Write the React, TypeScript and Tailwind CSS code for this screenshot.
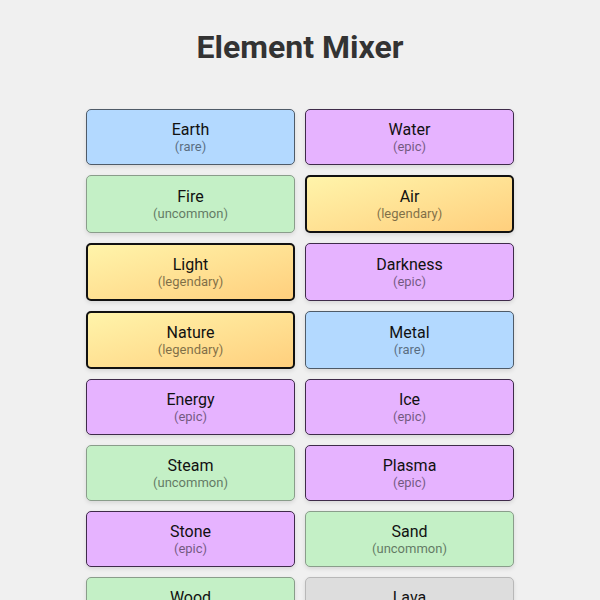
import React from "react";

type Rarity = "common" | "uncommon" | "rare" | "epic" | "legendary";

const items: { name: string; rarity: Rarity }[] = [
  { name: "Earth", rarity: "rare" },
  { name: "Water", rarity: "epic" },
  { name: "Fire", rarity: "uncommon" },
  { name: "Air", rarity: "legendary" },
  { name: "Light", rarity: "legendary" },
  { name: "Darkness", rarity: "epic" },
  { name: "Nature", rarity: "legendary" },
  { name: "Metal", rarity: "rare" },
  { name: "Energy", rarity: "epic" },
  { name: "Ice", rarity: "epic" },
  { name: "Steam", rarity: "uncommon" },
  { name: "Plasma", rarity: "epic" },
  { name: "Stone", rarity: "epic" },
  { name: "Sand", rarity: "uncommon" },
  { name: "Wood", rarity: "uncommon" },
  { name: "Lava", rarity: "common" },
];

const styles: Record<Rarity, string> = {
  common: "bg-[#dddddd] border border-[#b8b8b8]",
  uncommon: "bg-[#c4f0c6] border border-[#8a9d8b]",
  rare: "bg-[#b3d9ff] border border-[#4f5b68]",
  epic: "bg-[#e6b3ff] border border-[#3f2b4a]",
  legendary:
    "bg-linear-to-br from-[#fff4aa] to-[#ffcf7d] border-2 border-[#111111]",
};

export default function App() {
  return (
    <div
      className="min-h-[600px] bg-[#f0f0f0] pt-[27px]"
      style={{ fontFamily: "Roboto, 'Liberation Sans', sans-serif" }}
    >
      <h1 className="text-center text-[32px] leading-[40px] font-bold text-[#333333] mb-[42px]">
        Element Mixer
      </h1>
      <div className="mx-auto w-[428px] grid grid-cols-2 gap-[10px]">
        {items.map((it) => (
          <div
            key={it.name}
            className={`${styles[it.rarity]} rounded-[5px] py-[10px] flex flex-col items-center justify-center shadow-[0_2px_4px_rgba(0,0,0,0.1)]`}
          >
            <div className="text-[16px] leading-[19px] text-[#111111]">
              {it.name}
            </div>
            <div className="text-[13px] leading-[15px] text-black opacity-50">
              ({it.rarity})
            </div>
          </div>
        ))}
      </div>
    </div>
  );
}
